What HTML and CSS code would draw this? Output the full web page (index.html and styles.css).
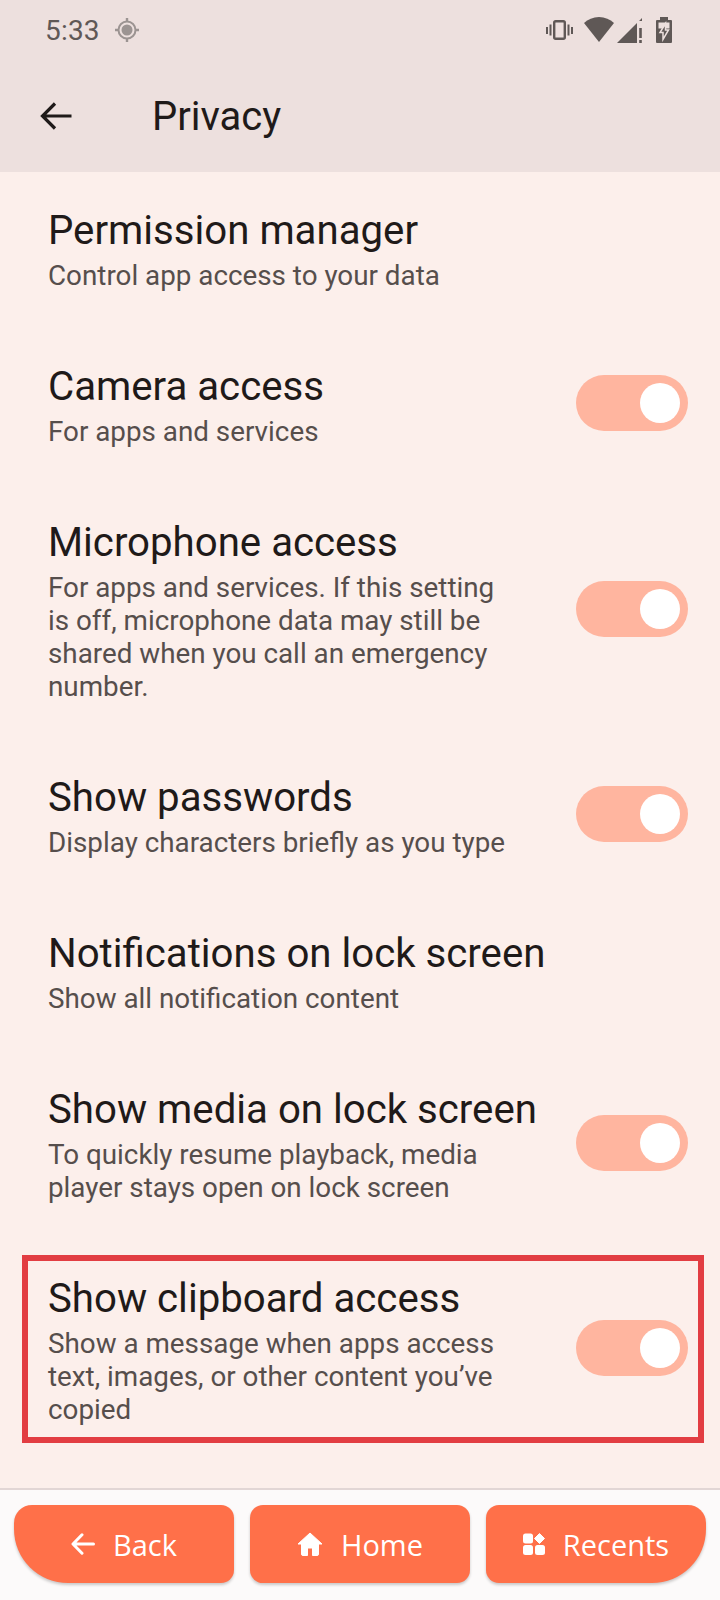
FILE: index.html
```html
<!DOCTYPE html>
<html lang="en">
<head>
<meta charset="utf-8">
<title>Privacy</title>
<link rel="stylesheet" href="styles.css">
</head>
<body>
<div class="phone">
  <header class="appbar">
    <div class="status">
      <div class="status-left">
        <span class="time">5:33</span>
        <svg class="ic-loc" width="24" height="24" viewBox="0 0 24 24"><circle cx="12" cy="12" r="8.500" fill="none" stroke="#9c9492" stroke-width="2"/><circle cx="12" cy="12" r="5.500" fill="#9c9492"/><path d="M12 0v4M12 20v4M0 12h4M20 12h4" stroke="#9c9492" stroke-width="2.400"/></svg>
      </div>
      <svg class="status-right" width="126" height="28" viewBox="0 0 126 28">
        <rect x="8.200" y="5.200" width="10.600" height="17.600" rx="1.500" fill="none" stroke="#5f5856" stroke-width="2.400"/>
        <path d="M1 11v7M4.500 8.500v11M22.500 8.500v11M26 11v7" stroke="#5f5856" stroke-width="2"/>
        <path d="M38 7C42 3.400 47 1 53 1s11 2.400 15 6L53 26z" fill="#5f5856"/>
        <path d="M71 27L91 7v20zM93 5l3-3v3z" fill="#5f5856"/>
        <path d="M94.500 12v10M94.500 24v3" stroke="#5f5856" stroke-width="2.600"/>
        <path d="M114 1h8v3h3a1 1 0 0 1 1 1v21a1 1 0 0 1-1 1h-14a1 1 0 0 1-1-1V5a1 1 0 0 1 1-1h3z" fill="#5f5856"/>
        <path d="M112.500 6.500h11v6h-11z" fill="#ede0de"/>
        <path d="M119.500 7.500L114 16.500h3v7l5.500-9.500h-3z" fill="#5f5856" stroke="#ede0de" stroke-width="1.500"/>
      </svg>
    </div>
    <div class="toolbar">
      <svg class="back" width="36" height="36" viewBox="0 0 36 36"><path d="M33.500 18H5M17 5.500L4.500 18 17 30.500" fill="none" stroke="#1f1a19" stroke-width="3.200"/></svg>
      <h1 class="page-title">Privacy</h1>
    </div>
  </header>

  <main class="list">
    <div class="row">
      <div class="text"><div class="title">Permission manager</div><div class="sub">Control app access to your data</div></div>
    </div>
    <div class="row">
      <div class="text"><div class="title">Camera access</div><div class="sub">For apps and services</div></div>
      <div class="switch"><span class="knob"></span></div>
    </div>
    <div class="row">
      <div class="text"><div class="title">Microphone access</div><div class="sub">For apps and services. If this setting is off, microphone data may still be shared when you call an emergency number.</div></div>
      <div class="switch"><span class="knob"></span></div>
    </div>
    <div class="row">
      <div class="text"><div class="title">Show passwords</div><div class="sub">Display characters briefly as you type</div></div>
      <div class="switch"><span class="knob"></span></div>
    </div>
    <div class="row">
      <div class="text"><div class="title">Notifications on lock screen</div><div class="sub">Show all notification content</div></div>
    </div>
    <div class="row">
      <div class="text"><div class="title">Show media on lock screen</div><div class="sub">To quickly resume playback, media player stays open on lock screen</div></div>
      <div class="switch"><span class="knob"></span></div>
    </div>
    <div class="row">
      <div class="text"><div class="title">Show clipboard access</div><div class="sub">Show a message when apps access text, images, or other content you’ve copied</div></div>
      <div class="switch"><span class="knob"></span></div>
      <div class="mark"></div>
    </div>
  </main>

  <footer class="navbar">
    <button class="nav nav-first">
      <svg width="24" height="22" viewBox="0 0 24 22"><path d="M22.500 11H2.500M11 1.800L2 11l9 9.200" fill="none" stroke="#fff" stroke-width="3" stroke-linecap="round" stroke-linejoin="round"/></svg>
      <span>Back</span>
    </button>
    <button class="nav">
      <svg width="26" height="24" viewBox="0 0 26 24"><path d="M13 1L1 12h3.500v10a1.500 1.500 0 0 0 1.500 1.500h4.500V16h5v7.500H20a1.500 1.500 0 0 0 1.500-1.500V12H25z" fill="#fff" stroke="#fff" stroke-linejoin="round"/></svg>
      <span>Home</span>
    </button>
    <button class="nav nav-last">
      <svg width="22" height="22" viewBox="0 0 22 22"><rect x="0" y="0.500" width="10" height="10" rx="2.500" fill="#fff"/><path d="M16.500 0.500l5 5-5 5-5-5z" fill="#fff" stroke="#fff" stroke-linejoin="round"/><rect x="0" y="12" width="10" height="10" rx="2.500" fill="#fff"/><rect x="12" y="12" width="10" height="10" rx="2.500" fill="#fff"/></svg>
      <span>Recents</span>
    </button>
  </footer>
</div>
</body>
</html>
```
FILE: styles.css
```css
* { box-sizing: border-box; }
html, body { margin: 0; padding: 0; }
body { background: #fcefeb; font-family: Roboto, "Noto Sans", sans-serif; }
.phone { position: relative; width: 720px; height: 1600px; display: flex; flex-direction: column; overflow: hidden; background: #fcefeb; }

.appbar { height: 172px; flex: none; background: #ede0de; display: flex; flex-direction: column; }
.status { height: 60px; padding: 0 48px 0 45px; display: flex; align-items: center; justify-content: space-between; }
.status-left { display: flex; align-items: center; gap: 15px; }
.time { font-size: 28px; color: #5f5856; letter-spacing: .2px; }
.toolbar { height: 112px; display: flex; align-items: center; padding-left: 38px; }
.back { flex: none; }
.page-title { margin: 0 0 0 78px; font-size: 40px; font-weight: 400; color: #1f1a19; }

.list { flex: none; }
.row { position: relative; display: flex; align-items: center; justify-content: space-between; padding: 30px 32px 36px 48px; }
.title { font-size: 40.2px; line-height: 57px; color: #1f1a19; white-space: nowrap; }
.sub { max-width: 464px; font-size: 27.8px; line-height: 33px; color: #564e4c; }
.switch { flex: none; width: 112px; height: 56px; border-radius: 28px; background: #ffb59f; display: flex; align-items: center; justify-content: flex-end; padding-right: 8px; }
.knob { width: 40px; height: 40px; border-radius: 50%; background: #fff; }
.mark { position: absolute; left: 22px; right: 16px; top: 15px; bottom: 19px; border: 6px solid #e23d42; }

.navbar { position: absolute; left: 0; right: 0; bottom: 0; height: 112px; background: #fcfafa; border-top: 2px solid #e2d6d5; display: flex; gap: 16px; padding: 15px 14px 0; }
.nav { width: 220px; height: 78px; border: 0; padding: 0; background: #ff7049; color: #fff; border-radius: 13px; box-shadow: 0 2px 3px rgba(0,0,0,.2); display: flex; align-items: center; justify-content: center; gap: 18px; font-family: "Open Sans", sans-serif; font-size: 29px; font-weight: 500; }
.nav-first { border-radius: 18px 13px 13px 54px; }
.nav-last { border-radius: 13px 18px 54px 13px; }
```
